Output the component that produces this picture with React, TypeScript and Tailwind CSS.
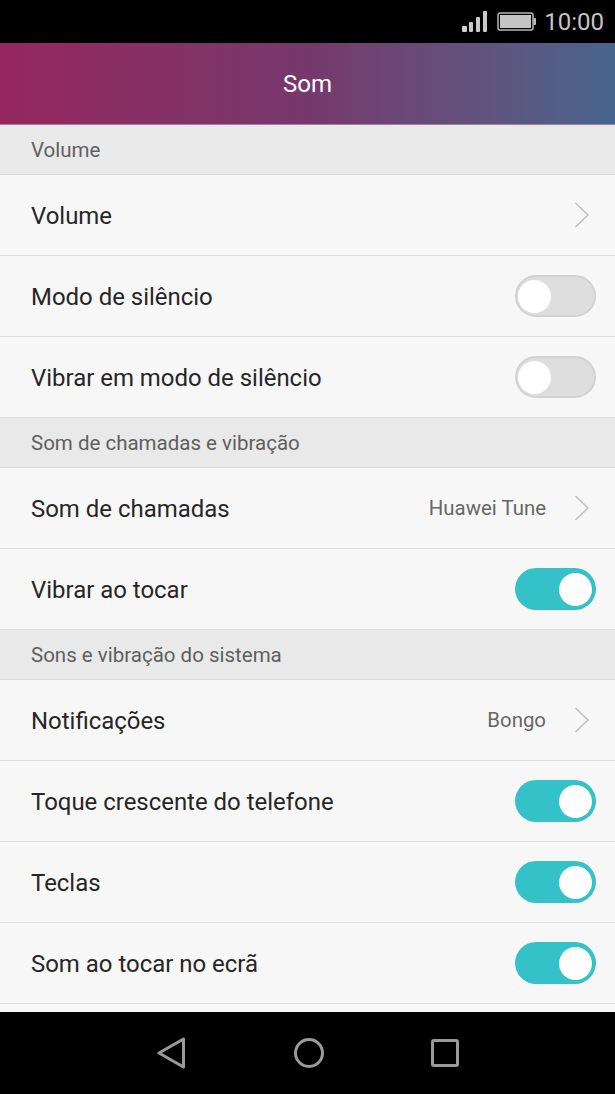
import React from "react";

function Toggle({ on }: { on: boolean }) {
  return (
    <div
      className={
        on
          ? "flex h-[42px] w-[81px] items-center justify-end rounded-full bg-[#35c1c8] mr-[19px] ml-[20px]"
          : "flex h-[42px] w-[81px] items-center justify-start rounded-full border-2 border-[#d2d2d2] bg-[#dedede] mr-[19px] ml-[20px]"
      }
    >
      <div className={on ? "h-[33px] w-[33px] rounded-full bg-white mr-[4px]" : "h-[33px] w-[33px] rounded-full bg-white ml-[1px]"} />
    </div>
  );
}

function Chevron() {
  return (
    <svg width="16" height="26" viewBox="0 0 16 26" className="mr-[25px] ml-[28px] shrink-0">
      <path d="M1.5 1 L14 13 L1.5 25" fill="none" stroke="#bdbdbd" strokeWidth="1.4" />
    </svg>
  );
}

function Section({ title }: { title: string }) {
  return (
    <div className="flex h-[50px] items-center border-b border-[#d8d8d8] bg-[#e9e9e9] pl-[31px] pt-[2px] text-[20.5px] text-[#5f5f5f]">
      {title}
    </div>
  );
}

function Row({ label, value, toggle, chevron }: { label: string; value?: string; toggle?: boolean; chevron?: boolean }) {
  return (
    <div className="flex h-[81px] items-center border-b border-[#dedede] bg-[#f7f7f7] pl-[31px]">
      <span className="mt-[3px] flex-1 text-[23.95px] text-[#262626]">{label}</span>
      {value && <span className="text-[20.4px] text-[#666666]">{value}</span>}
      {chevron && <Chevron />}
      {toggle !== undefined && <Toggle on={toggle} />}
    </div>
  );
}

export default function App() {
  return (
    <div className="flex h-[1094px] w-[615px] flex-col overflow-hidden bg-black font-['Roboto',sans-serif]">
      <div className="flex h-[43px] items-center justify-end bg-black pr-[11px] text-[#c4c4c4]">
        <svg width="25" height="21" viewBox="0 0 25 21" className="mr-[10px]">
          <rect x="0" y="15" width="5" height="6" rx="1" fill="#d0d0d0" />
          <rect x="7" y="11" width="4" height="10" rx="1" fill="#c8c8c8" />
          <rect x="14" y="6" width="4" height="15" rx="1" fill="#c8c8c8" />
          <rect x="21" y="0" width="4" height="21" rx="1" fill="#c8c8c8" />
        </svg>
        <svg width="39" height="20" viewBox="0 0 39 20" className="mr-[8px]">
          <rect x="1" y="1" width="35" height="17" rx="2" fill="#000" stroke="#b8b8b8" strokeWidth="1.5" />
          <rect x="3" y="3" width="31" height="13" fill="#c4c4c4" />
          <rect x="36.5" y="6" width="2.5" height="7" rx="1" fill="#b8b8b8" />
        </svg>
        <span className="text-[24px] leading-none">10:00</span>
      </div>
      <div className="flex h-[82px] items-center justify-center border-b border-[#a47fa5] bg-gradient-to-r from-[#95265f] via-[#76386c] to-[#46648c] text-[24px] text-white">
        Som
      </div>
      <div className="flex h-[887px] flex-col bg-[#f7f7f7]">
        <Section title="Volume" />
        <Row label="Volume" chevron />
        <Row label="Modo de silêncio" toggle={false} />
        <Row label="Vibrar em modo de silêncio" toggle={false} />
        <Section title="Som de chamadas e vibração" />
        <Row label="Som de chamadas" value="Huawei Tune" chevron />
        <Row label="Vibrar ao tocar" toggle />
        <Section title="Sons e vibração do sistema" />
        <Row label="Notificações" value="Bongo" chevron />
        <Row label="Toque crescente do telefone" toggle />
        <Row label="Teclas" toggle />
        <Row label="Som ao tocar no ecrã" toggle />
      </div>
      <div className="flex h-[82px] items-center justify-center bg-black">
        <div className="flex items-center">
          <svg width="29" height="32" viewBox="0 0 29 32" className="ml-[1px] mr-[108px]">
            <path d="M26.5 2 L26.5 30 L2 16 Z" fill="none" stroke="#9a9a9a" strokeWidth="3" strokeLinejoin="round" />
          </svg>
          <svg width="30" height="30" viewBox="0 0 30 30" className="mr-[107px]">
            <circle cx="15" cy="15" r="13.5" fill="none" stroke="#9a9a9a" strokeWidth="3" />
          </svg>
          <svg width="28" height="28" viewBox="0 0 28 28">
            <rect x="1.5" y="1.5" width="25" height="25" rx="1.5" fill="none" stroke="#9a9a9a" strokeWidth="3" />
          </svg>
        </div>
      </div>
    </div>
  );
}
